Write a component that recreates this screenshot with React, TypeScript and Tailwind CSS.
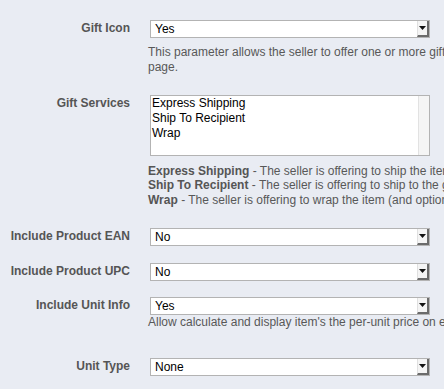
import React from "react";

function Arrow() {
  return (
    <div className="relative w-[12px] h-[16px] bg-[#f4f4f4] border-r-2 border-b-2 border-r-[#6b6b6b] border-b-[#6b6b6b] border-l border-l-[#e0e0e0] flex items-center justify-center">
      <svg width="7" height="4" viewBox="0 0 7 4" className="block">
        <polygon points="0,0 7,0 3.5,4" fill="#111" />
      </svg>
    </div>
  );
}

function Select({ value }: { value: string }) {
  return (
    <div className="ml-[2px] w-[280px] h-[18px] bg-white border border-[#b3b3b3] flex items-center">
      <span className="flex-1 pl-[4px] text-black leading-[16px]">{value}</span>
      <Arrow />
    </div>
  );
}

function Row({
  label,
  mt,
  children,
}: {
  label: string;
  mt: string;
  children: React.ReactNode;
}) {
  return (
    <div className={`flex ${mt}`}>
      <div className="w-[130px] shrink-0 text-right font-bold text-[#555555] leading-[15px] pt-[1px] whitespace-nowrap">
        {label}
      </div>
      <div className="ml-[18px] w-[500px] shrink-0">{children}</div>
    </div>
  );
}

export default function App() {
  return (
    <div className="w-[444px] h-[389px] bg-[#e9ecf3] overflow-hidden font-['Liberation_Sans',Arial,sans-serif] text-[12px]">
      <div className="pt-[20px]">
        <Row label="Gift Icon" mt="mt-0">
          <Select value="Yes" />
          <div className="mt-[7px] text-[#585858] leading-[14.5px] whitespace-nowrap">
            This parameter allows the seller to offer one or more gift options to buyers on the product
            <br />
            page.
          </div>
        </Row>
        <Row label="Gift Services" mt="mt-[21px]">
          <div className="ml-[2px] w-[280px] h-[61px] bg-white border border-[#b3b3b3] flex">
            <div className="flex-1 pl-[1px] pt-[0px] text-black leading-[15px]">
              <div>Express Shipping</div>
              <div>Ship To Recipient</div>
              <div>Wrap</div>
            </div>
            <div className="w-[11px] h-full bg-[#f5f5f5] border-l border-[#e2e2e2]" />
          </div>
          <div className="mt-[7.5px] text-[#585858] leading-[14.5px] whitespace-nowrap">
            <div>
              <b className="text-[#555555]">Express Shipping</b> - The seller is offering to ship the item using expedited shipping
            </div>
            <div>
              <b className="text-[#555555]">Ship To Recipient</b> - The seller is offering to ship to the gift recipient
            </div>
            <div>
              <b className="text-[#555555]">Wrap</b> - The seller is offering to wrap the item (and optionally include a card)
            </div>
          </div>
        </Row>
        <Row label="Include Product EAN" mt="mt-[20.5px]">
          <Select value="No" />
        </Row>
        <Row label="Include Product UPC" mt="mt-[17px]">
          <Select value="No" />
        </Row>
        <Row label="Include Unit Info" mt="mt-[16px]">
          <Select value="Yes" />
          <div className="mt-[0px] text-[#585858] leading-[14.5px] whitespace-nowrap">
            Allow calculate and display item's the per-unit price on eBay.
          </div>
        </Row>
        <Row label="Unit Type" mt="mt-[28.5px]">
          <Select value="None" />
        </Row>
      </div>
    </div>
  );
}
